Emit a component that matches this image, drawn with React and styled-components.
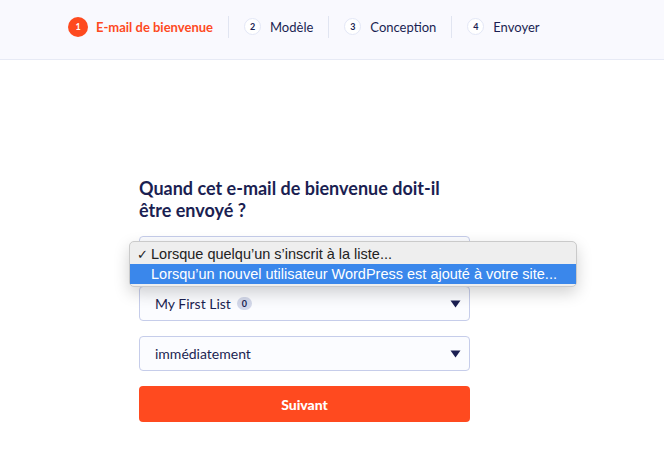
import styled, { createGlobalStyle } from "styled-components";

const GlobalStyle = createGlobalStyle`
    body {
        margin: 0;
        background: #ffffff;
        font-family: Lato, "Liberation Sans", sans-serif;
    }
`;

const steps = [
    { n: 1, label: "E-mail de bienvenue", active: true },
    { n: 2, label: "Modèle" },
    { n: 3, label: "Conception" },
    { n: 4, label: "Envoyer" },
];

const Caret = () => (
    <svg width="11" height="8" viewBox="0 0 11 8">
        <path d="M0.5 0.5 L10.5 0.5 L5.5 7.5 Z" fill="#1b1f52" />
    </svg>
);

const App = () => {
    return (
        <>
            <GlobalStyle />
            <Header>
                {steps.map((s, i) => (
                    <StepGroup key={s.n}>
                        {i > 0 && <Divider />}
                        <Step>
                            <StepNum $active={s.active}>{s.n}</StepNum>
                            <StepLabel $active={s.active}>{s.label}</StepLabel>
                        </Step>
                    </StepGroup>
                ))}
            </Header>

            <Main>
                <Form>
                    <Title>Quand cet e-mail de bienvenue doit-il être envoyé ?</Title>

                    {/* the open native list covers this first select */}
                    <SelectBox>
                        <Popup>
                            <PopupItem>
                                <Check>✓</Check>
                                Lorsque quelqu’un s’inscrit à la liste...
                            </PopupItem>
                            <PopupItem $selected>
                                <Check />
                                Lorsqu’un nouvel utilisateur WordPress est ajouté à votre site...
                            </PopupItem>
                        </Popup>
                    </SelectBox>

                    <SelectBox>
                        <SelectText>
                            My First List <Badge>0</Badge>
                        </SelectText>
                        <Caret />
                    </SelectBox>

                    <SelectBox>
                        <SelectText>immédiatement</SelectText>
                        <Caret />
                    </SelectBox>

                    <Button>Suivant</Button>
                </Form>
            </Main>
        </>
    );
};

const Header = styled.div`
    height: 60px;
    background: #f9f9fe;
    border-bottom: 1px solid #e7eaf5;
    display: flex;
    align-items: center;
    padding: 0 0 6px 68px;
    box-sizing: border-box;
`;

const StepGroup = styled.div`
    display: flex;
    align-items: center;
`;

const Divider = styled.div`
    width: 1px;
    height: 22px;
    background: #e1e5f1;
    margin: 0 15px;
`;

const Step = styled.div`
    display: flex;
    align-items: center;
    gap: 9px;
`;

const StepNum = styled.div`
    width: ${(p) => (p.$active ? "20px" : "17px")};
    height: ${(p) => (p.$active ? "20px" : "17px")};
    border-radius: 50%;
    box-sizing: border-box;
    display: flex;
    align-items: center;
    justify-content: center;
    font-size: 9px;
    font-weight: 700;
    background: ${(p) => (p.$active ? "#fe4a1f" : "#ffffff")};
    color: ${(p) => (p.$active ? "#ffffff" : "#1b1f52")};
    border: ${(p) => (p.$active ? "none" : "1.5px solid #e3e7f6")};
    margin-right: ${(p) => (p.$active ? "-1px" : "0")};
`;

const StepLabel = styled.span`
    font-size: 13px;
    font-weight: ${(p) => (p.$active ? 700 : 400)};
    color: ${(p) => (p.$active ? "#fe4a1f" : "#1b1f52")};
`;

const Main = styled.div`
    padding: 117px 0 0 139px;
`;

const Form = styled.div`
    width: 331px;
    display: flex;
    flex-direction: column;
    gap: 15px;
`;

const Title = styled.h2`
    margin: 0;
    font-size: 18px;
    line-height: 22px;
    font-weight: 700;
    color: #1b1f52;
    width: 320px;
`;

const SelectBox = styled.div`
    position: relative;
    height: 35px;
    box-sizing: border-box;
    border: 1px solid #c6cdea;
    border-radius: 4px;
    background: #fbfcff;
    display: flex;
    align-items: center;
    justify-content: space-between;
    padding: 0 8px 0 15px;
`;

const SelectText = styled.span`
    font-size: 14px;
    color: #1b1f52;
    display: flex;
    align-items: center;
    gap: 6px;
`;

const Badge = styled.span`
    display: inline-flex;
    align-items: center;
    justify-content: center;
    min-width: 15px;
    height: 13px;
    padding: 0 2px;
    border-radius: 7px;
    background: #d3d8ea;
    font-size: 9px;
    font-weight: 700;
    color: #1b1f52;
    box-sizing: border-box;
`;

const Popup = styled.div`
    position: absolute;
    left: -11px;
    top: 4px;
    width: 448px;
    box-sizing: border-box;
    background: #eeeeee;
    border: 1px solid #cacaca;
    border-radius: 5px;
    padding: 2px 0;
    box-shadow: 0 6px 16px rgba(0, 0, 0, 0.18);
    z-index: 2;
    font-family: "Liberation Sans", "DejaVu Sans", sans-serif;
`;

const PopupItem = styled.div`
    height: 20px;
    display: flex;
    align-items: center;
    font-size: 14.5px;
    white-space: nowrap;
    background: ${(p) => (p.$selected ? "#3a87eb" : "transparent")};
    color: ${(p) => (p.$selected ? "#ffffff" : "#222222")};
`;

const Check = styled.span`
    width: 21px;
    padding-left: 7px;
    box-sizing: border-box;
    font-size: 13px;
    flex-shrink: 0;
`;

const Button = styled.button`
    height: 36px;
    border: none;
    border-radius: 4px;
    background: #ff4a1f;
    color: #ffffff;
    font-family: Lato, "Liberation Sans", sans-serif;
    font-size: 14px;
    font-weight: 900;
    cursor: pointer;
`;

export default App;
